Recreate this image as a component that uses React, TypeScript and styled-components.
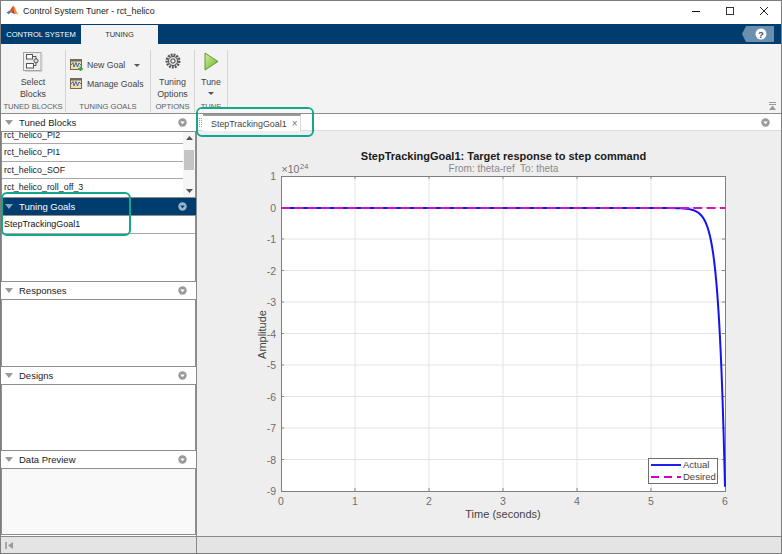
import React from "react";
import styled, { createGlobalStyle } from "styled-components";

const Global = createGlobalStyle`
  html, body { margin: 0; padding: 0; background: #fff; overflow: hidden; }
  * { box-sizing: border-box; }
`;

const FONT = `"Liberation Sans", Arial, sans-serif`;
const NAVY = "#003d6f";

const Window = styled.div`
  position: relative; width: 782px; height: 554px; display: flex; flex-direction: column;
  font-family: ${FONT}; border: 1px solid #7d7d7d; background: #fff; overflow: hidden; color: #222;
`;
const TitleBar = styled.div`
  height: 23px; flex: none; display: flex; align-items: center; padding: 0 0 3px 5px; background: #fff; font-size: 8.9px; color: #1c1c1c;
`;
const LogoBox = styled.div` width: 17px; flex: none; line-height: 0; `;
const TitleText = styled.span` flex: 1; `;
const WinButton = styled.div`
  width: 34px; height: 20px; display: flex; align-items: center; justify-content: center;
`;
const TabStrip = styled.div`
  height: 20px; flex: none; background: ${NAVY}; display: flex; align-items: stretch; padding-right: 7px;
`;
const StripTab = styled.div<{ $active?: boolean }>`
  width: ${p => (p.$active ? "77px" : "80px")}; display: flex; align-items: center; justify-content: center;
  font-size: 7.5px;
  color: ${p => (p.$active ? "#333" : "#fff")}; background: ${p => (p.$active ? "#f3f3f3" : "transparent")};
  margin-top: ${p => (p.$active ? "1px" : "0")};
`;
const StripSpacer = styled.div` flex: 1; `;
const HelpBox = styled.div` display: flex; align-items: center; margin-top: 2px; height: 16px; `;
const Ribbon = styled.div`
  height: 70px; flex: none; background: #f3f3f3; display: flex; position: relative; border-bottom: 1px solid #8c8c8c; padding-top: 6px;
`;
const Group = styled.div<{ $w: number }>`
  width: ${p => p.$w}px; flex: none; display: flex; flex-direction: column; align-items: center; border-right: 1px solid #d4d4d4; height: 62px;
`;
const GroupBody = styled.div`
  flex: 1; display: flex; flex-direction: column; align-items: center; width: 100%; font-size: 8.9px; line-height: 12px; color: #444; text-align: center;
`;
const GroupLabel = styled.div`
  font-size: 7.6px; color: #5c5c5c; line-height: 10px; white-space: nowrap; height: 10px;
`;
const BigIcon = styled.div` height: 26px; width: 100%; display: flex; justify-content: center; align-items: flex-start; padding-top: 2px; `;
const SmallRow = styled.div`
  display: flex; align-items: center; gap: 4px; height: 18px; font-size: 8.7px; color: #444; width: 100%; padding-left: 4px; white-space: nowrap;
`;
const RowStack = styled.div` display: flex; flex-direction: column; gap: 1px; width: 100%; padding-top: 6px; `;
const Caret = styled.span<{ $mt?: number }>`
  display: inline-block; width: 0; height: 0; border-left: 3px solid transparent; border-right: 3px solid transparent; border-top: 3px solid #555;
  margin-top: ${p => p.$mt ?? 0}px;
`;
const CollapseGlyph = styled.div`
  position: absolute; right: 4px; bottom: 2px; line-height: 0;
`;
const Main = styled.div` flex: 1; min-height: 0; display: flex; `;
const Left = styled.div`
  width: 196px; flex: none; display: flex; flex-direction: column; border-right: 1px solid #8a8a8a;
`;
const Section = styled.div<{ $h: number; $last?: boolean }>`
  height: ${p => p.$h}px; flex: none; display: flex; flex-direction: column;
  padding-bottom: ${p => (p.$last ? "1px" : "0")};
`;
const Header = styled.div<{ $active?: boolean }>`
  height: 17px; flex: none; display: flex; align-items: center; padding: 0 9px 0 4px; font-size: 9.5px; gap: 6px;
  background: ${p => (p.$active ? NAVY : "#fff")}; color: ${p => (p.$active ? "#fff" : "#222")};
`;
const HeaderText = styled.span` flex: 1; `;
const Tri = styled.span<{ $active?: boolean }>`
  width: 0; height: 0; border-left: 4px solid transparent; border-right: 4px solid transparent;
  border-top: 5px solid ${p => (p.$active ? "#8aa4bd" : "#9a9a9a")};
`;
const ListBox = styled.div<{ $bg?: string }>`
  flex: 1; min-height: 0; border: 1px solid #8e8e8e; background: ${p => p.$bg || "#fff"}; display: flex; overflow: hidden; position: relative;
`;
const ListCol = styled.div` flex: 1; min-width: 0; overflow: hidden; `;
const Rows = styled.div` margin-top: -5.5px; `;
const Row = styled.div<{ $plain?: boolean }>`
  height: 17.5px; font-size: 8.9px; padding: 2px 0 0 2px; line-height: 12px; color: #222; white-space: nowrap;
  border-bottom: ${p => (p.$plain ? "none" : "1px solid #a8a8a8")};
`;
const GoalRow = styled.div`
  height: 18px; font-size: 8.95px; line-height: 16px; padding-left: 2px; border-bottom: 1px solid #a8a8a8; color: #111;
`;
const Scrollbar = styled.div`
  width: 12px; flex: none; display: flex; flex-direction: column; align-items: center; background: #f6f6f6; justify-content: space-between; position: relative; padding: 4px 0;
`;
const Thumb = styled.div`
  position: absolute; top: 18px; left: 1px; width: 10px; height: 20px; background: #c4c4c4;
`;
const Right = styled.div` flex: 1; min-width: 0; display: flex; flex-direction: column; background: #eeeeee; `;
const DocBar = styled.div`
  height: 17px; flex: none; background: #fff; display: flex; align-items: flex-end; border-bottom: 1px solid #dcdcdc; padding-left: 1px; position: relative;
`;
const Grip = styled.div`
  width: 3px; height: 9px; margin: 0 1px 3px 1px; border-left: 1px dotted #999; border-right: 1px dotted #999;
`;
const DocTab = styled.div`
  height: 17px; width: 98px; border-top: 2px solid #9a9a9a; background: #fff; font-size: 8.9px; padding-left: 8px; display: flex; align-items: center; gap: 5px; color: #444; border-right: 1px solid #dadada; margin-bottom: -1px;
`;
const TabClose = styled.span` font-size: 10px; color: #777; line-height: 1; `;
const DocMenu = styled.div` position: absolute; right: 11px; top: 4px; line-height: 0; `;
const PlotArea = styled.div` flex: 1; min-height: 0; line-height: 0; `;
const Status = styled.div`
  height: 17px; flex: none; display: flex; background: #e4e4e4; border-top: 1px solid #8a8a8a;
`;
const StatusLeft = styled.div`
  width: 196px; flex: none; border-right: 1px solid #8a8a8a; display: flex; align-items: center; padding-left: 4px;
`;
const Callout = styled.div<{ $l: number; $t: number; $w: number; $h: number; $patch?: boolean }>`
  position: absolute; left: ${p => p.$l}px; top: ${p => p.$t}px; width: ${p => p.$w}px; height: ${p => p.$h}px;
  border: 2px solid #12a88c; border-radius: 6px; pointer-events: none;
  &::before {
    content: ""; display: ${p => (p.$patch ? "block" : "none")}; height: 4px; border-radius: 4px 4px 0 0; background: #f7f7f7;
  }
`;

const Logo = () => (
  <svg width="13" height="12" viewBox="0 0 16 15">
    <path d="M0.5 9.5 L4.5 7 L6.5 8.5 L3.5 11.5 Z" fill="#3f7fb8" />
    <path d="M4.5 7 L9 0.5 L11 4.5 L6.5 9.5 Z" fill="#d6582a" />
    <path d="M9 0.5 C11 2.5 13.5 9.5 15.5 12.5 C13.5 11.5 12.5 10.5 11 11.5 C10 8.5 10 4.5 9 0.5 Z" fill="#e9913a" />
    <path d="M6.5 9.5 L9.5 5.5 L11 11.5 Z" fill="#b83a1c" />
  </svg>
);

const SelectBlocks = () => (
  <svg width="20" height="20" viewBox="0 0 20 20">
    <rect x="0.5" y="0.5" width="17.5" height="18" fill="#eeeeee" stroke="#a3a3a3" />
    <path d="M19 2 V19.5 H2" stroke="#cfcfcf" fill="none" />
    <rect x="3.5" y="2.5" width="6" height="4.5" fill="#fdfdfd" stroke="#555" />
    <rect x="3.5" y="11.5" width="7" height="4.5" fill="#fdfdfd" stroke="#555" />
    <circle cx="13" cy="8.8" r="2.1" fill="#d6d6d6" stroke="#555" />
    <path d="M9.5 4.5 H13 V6.7 M10.5 13.5 H13 V10.9" stroke="#555" fill="none" />
  </svg>
);
const GoalIcon = ({ plus }: { plus?: boolean }) => (
  <svg width="13" height="12" viewBox="0 0 13 12">
    <rect x="0.5" y="0.5" width="11" height="10" fill="#f0dfae" stroke="#7b6a4a" />
    <rect x="1" y="1" width="10" height="1.5" fill="#6d6a63" />
    <path d="M1 6 L3 3.5 L4 8 L6 3.5 L7.5 8 L9 4 L11 6" stroke="#3e6aa8" fill="none" />
    {plus && <path d="M10.5 7.5 V12 M8.2 9.8 H12.8" stroke="#3fa83a" strokeWidth="1.7" />}
  </svg>
);
const Gear = () => (
  <svg width="18" height="18" viewBox="0 0 18 18">
    <circle cx="9" cy="9" r="6.2" fill="none" stroke="#555" strokeWidth="2.6" strokeDasharray="1.9 1" />
    <circle cx="9" cy="9" r="4.6" fill="#d8d8d8" stroke="#555" />
    <circle cx="9" cy="9" r="2.1" fill="#f6f6f6" stroke="#444" />
  </svg>
);
const Play = () => (
  <svg width="15" height="19" viewBox="0 0 15 19">
    <defs>
      <linearGradient id="pg" x1="0" y1="0" x2="1" y2="1">
        <stop offset="0" stopColor="#d3ec9f" />
        <stop offset="1" stopColor="#6cb32a" />
      </linearGradient>
    </defs>
    <path d="M1 1 L14 9.5 L1 18 Z" fill="url(#pg)" stroke="#5f9e2d" />
  </svg>
);
const Dropdown = ({ active }: { active?: boolean }) => (
  <svg width="9" height="9" viewBox="0 0 9 9">
    <circle cx="4.5" cy="4.5" r="4.2" fill={active ? "#9db3c8" : "#9a9a9a"} />
    <path d="M2.2 3.4 H6.8 L4.5 6.3 Z" fill={active ? NAVY : "#fff"} />
  </svg>
);

const W = 585, H = 405, OX = 197, OY = 131;
const xp = (v: number) => 281 - OX + v * 74;
const yp = (v: number) => 207.5 - OY - v * 31.5;
const ZERO_Y = 77;

const curvePath = () => {
  const pts: string[] = [`M${xp(0)} ${ZERO_Y}`];
  for (let t = 5; t <= 6.0001; t += 0.01) {
    pts.push(`L${xp(t).toFixed(2)} ${(ZERO_Y + 31.5 * 8.85 * Math.exp(11.3 * (t - 6))).toFixed(2)}`);
  }
  return pts.join(" ");
};

const Plot = () => {
  const xt = [0, 1, 2, 3, 4, 5, 6];
  const yt = [1, 0, -1, -2, -3, -4, -5, -6, -7, -8, -9];
  const L = xp(0), R = xp(6), T = yp(1), B = yp(-9);
  const ff = FONT;
  return (
    <svg width={W} height={H} viewBox={`0 0 ${W} ${H}`} style={{ display: "block" }}>
      <rect x={L} y={T} width={R - L} height={B - T} fill="#fff" />
      {xt.slice(1, 6).map(v => <line key={v} x1={xp(v)} x2={xp(v)} y1={T} y2={B} stroke="#e3e3e3" />)}
      {yt.slice(1, 10).map(v => <line key={v} x1={L} x2={R} y1={yp(v)} y2={yp(v)} stroke="#e3e3e3" />)}
      {xt.slice(1, 6).map(v => <line key={v} x1={xp(v)} x2={xp(v)} y1={T} y2={T + 3} stroke="#888" />)}
      {xt.slice(1, 6).map(v => <line key={v} x1={xp(v)} x2={xp(v)} y1={B} y2={B - 3} stroke="#888" />)}
      {yt.slice(1, 10).map(v => <line key={v} x1={L} x2={L + 3} y1={yp(v)} y2={yp(v)} stroke="#888" />)}
      {yt.slice(1, 10).map(v => <line key={v} x1={R} x2={R - 3} y1={yp(v)} y2={yp(v)} stroke="#888" />)}
      <rect x={L + 0.5} y={T + 0.5} width={R - L} height={B - T} fill="none" stroke="#7f7f7f" />
      <path d={curvePath()} fill="none" stroke="#1414f0" strokeWidth="2" strokeLinejoin="round" />
      <line x1={L} x2={R} y1={ZERO_Y} y2={ZERO_Y} stroke="#d014c4" strokeWidth="2" strokeDasharray="9 4.3" />
      <g fontFamily={ff} fontSize="10.5" fill="#6f6f6f">
        {xt.map(v => <text key={v} x={xp(v)} y={B + 14} textAnchor="middle">{v}</text>)}
        {yt.map(v => <text key={v} x={L - 5} y={yp(v) + 4} textAnchor="end">{v}</text>)}
        <text x={L + 0.5} y={T - 3} fontSize="10.5">×10</text>
        <text x={L + 19} y={T - 7} fontSize="7.5">24</text>
      </g>
      <text x={306.5} y={28.5} fontFamily={ff} fontSize="11" fontWeight="700" fill="#1a1a1a" textAnchor="middle">StepTrackingGoal1: Target response to step command</text>
      <text x={306.5} y={41} fontFamily={ff} fontSize="10" fill="#8a8a8a" textAnchor="middle" xmlSpace="preserve">From: theta-ref  To: theta</text>
      <text x={306} y={387} fontFamily={ff} fontSize="11" fill="#444" textAnchor="middle">Time (seconds)</text>
      <text transform={`translate(69 ${yp(-4) + 1}) rotate(-90)`} fontFamily={ff} fontSize="11" fill="#444" textAnchor="middle">Amplitude</text>
      <g>
        <rect x={451.5} y={327.5} width={69} height={25} fill="#fff" stroke="#6e6e6e" />
        <line x1={454} x2={484} y1={334} y2={334} stroke="#2020f0" strokeWidth="2" />
        <line x1={454} x2={484} y1={346} y2={346} stroke="#d000c8" strokeWidth="2" strokeDasharray="8 5" />
        <text x={486} y={337} fontFamily={ff} fontSize="9.5" fill="#444">Actual</text>
        <text x={486} y={349} fontFamily={ff} fontSize="9.5" fill="#444">Desired</text>
      </g>
    </svg>
  );
};

export default function App() {
  return (
    <>
      <Global />
      <Window>
        <TitleBar>
          <LogoBox><Logo /></LogoBox>
          <TitleText>Control System Tuner - rct_helico</TitleText>
          <WinButton><svg width="10" height="10"><path d="M1 5.5 H9" stroke="#111" /></svg></WinButton>
          <WinButton><svg width="10" height="10"><rect x="1.5" y="1.5" width="7" height="7" fill="none" stroke="#333" /></svg></WinButton>
          <WinButton><svg width="10" height="10"><path d="M1 1 L9 9 M9 1 L1 9" stroke="#222" /></svg></WinButton>
        </TitleBar>
        <TabStrip>
          <StripTab>CONTROL SYSTEM</StripTab>
          <StripTab $active>TUNING</StripTab>
          <StripSpacer />
          <HelpBox>
            <svg width="32" height="16" viewBox="0 0 32 16">
              <path d="M4 0 H32 V16 H4 L0 8 Z" fill="#6b8fae" />
              <circle cx="19" cy="8" r="5.5" fill="#fff" />
              <text x="19" y="11.5" fontSize="9.5" fontWeight="700" fontFamily={FONT} fill="#33536f" textAnchor="middle">?</text>
            </svg>
          </HelpBox>
        </TabStrip>
        <Ribbon>
          <Group $w={65}>
            <GroupBody>
              <BigIcon><SelectBlocks /></BigIcon>
              <span>Select<br />Blocks</span>
            </GroupBody>
            <GroupLabel>TUNED BLOCKS</GroupLabel>
          </Group>
          <Group $w={85}>
            <GroupBody>
              <RowStack>
                <SmallRow><GoalIcon plus />New Goal&nbsp;&nbsp;<Caret /></SmallRow>
                <SmallRow><GoalIcon />Manage Goals</SmallRow>
              </RowStack>
            </GroupBody>
            <GroupLabel>TUNING GOALS</GroupLabel>
          </Group>
          <Group $w={44}>
            <GroupBody>
              <BigIcon><Gear /></BigIcon>
              <span>Tuning<br />Options</span>
            </GroupBody>
            <GroupLabel>OPTIONS</GroupLabel>
          </Group>
          <Group $w={33}>
            <GroupBody>
              <BigIcon><Play /></BigIcon>
              <span>Tune</span>
              <Caret $mt={4} />
            </GroupBody>
            <GroupLabel>TUNE</GroupLabel>
          </Group>
          <CollapseGlyph>
            <svg width="9" height="9"><path d="M1 0.5 H8 M1 2.5 H8" stroke="#999" /><path d="M4.5 3.5 L8 8 H1 Z" fill="#999" /></svg>
          </CollapseGlyph>
        </Ribbon>
        <Main>
          <Left>
            <Section $h={84}>
              <Header><Tri /><HeaderText>Tuned Blocks</HeaderText><Dropdown /></Header>
              <ListBox>
                <ListCol>
                  <Rows>
                    <Row>rct_helico_PI2</Row>
                    <Row>rct_helico_PI1</Row>
                    <Row>rct_helico_SOF</Row>
                    <Row $plain>rct_helico_roll_off_3</Row>
                  </Rows>
                </ListCol>
                <Scrollbar>
                  <svg width="7" height="4"><path d="M3.5 0 L7 4 H0 Z" fill="#555" /></svg>
                  <Thumb />
                  <svg width="7" height="4"><path d="M0 0 H7 L3.5 4 Z" fill="#555" /></svg>
                </Scrollbar>
              </ListBox>
            </Section>
            <Section $h={84}>
              <Header $active><Tri $active /><HeaderText>Tuning Goals</HeaderText><Dropdown active /></Header>
              <ListBox><ListCol><GoalRow>StepTrackingGoal1</GoalRow></ListCol></ListBox>
            </Section>
            <Section $h={85}>
              <Header><Tri /><HeaderText>Responses</HeaderText><Dropdown /></Header>
              <ListBox />
            </Section>
            <Section $h={84}>
              <Header><Tri /><HeaderText>Designs</HeaderText><Dropdown /></Header>
              <ListBox />
            </Section>
            <Section $h={85} $last>
              <Header><Tri /><HeaderText>Data Preview</HeaderText><Dropdown /></Header>
              <ListBox $bg="#f9f9f9" />
            </Section>
          </Left>
          <Right>
            <DocBar>
              <Grip />
              <DocTab>StepTrackingGoal1<TabClose>×</TabClose></DocTab>
              <DocMenu><Dropdown /></DocMenu>
            </DocBar>
            <PlotArea><Plot /></PlotArea>
          </Right>
        </Main>
        <Status>
          <StatusLeft>
            <svg width="9" height="9"><path d="M1 1 V8" stroke="#999" strokeWidth="1.6" /><path d="M8 1 V8 L3 4.5 Z" fill="#999" /></svg>
          </StatusLeft>
        </Status>
        <Callout $l={195} $t={106} $w={118} $h={30} $patch />
        <Callout $l={0} $t={191} $w={130} $h={44} />
      </Window>
    </>
  );
}
